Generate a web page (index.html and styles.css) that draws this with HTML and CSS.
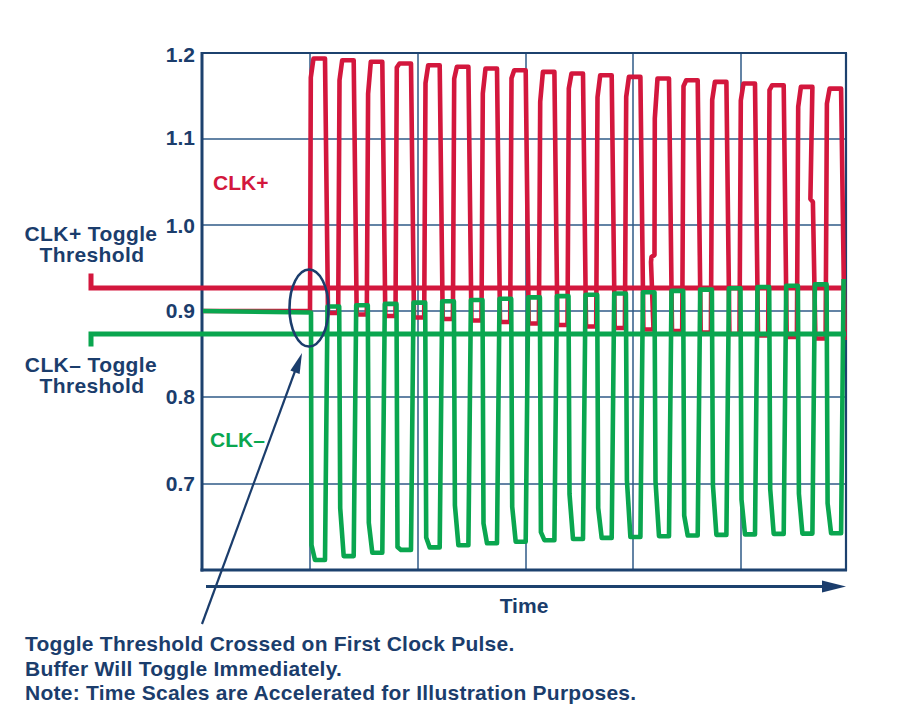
FILE: index.html
```html
<!DOCTYPE html>
<html lang="en">
<head>
<meta charset="utf-8">
<title>CLK toggle threshold</title>
<link rel="stylesheet" href="styles.css">
</head>
<body>
<div class="figure">
  <svg class="chart" width="900" height="632" viewBox="0 0 900 632" xmlns="http://www.w3.org/2000/svg">
    <g class="grid">
      <line x1="310" y1="53" x2="310" y2="570"/>
      <line x1="418" y1="53" x2="418" y2="570"/>
      <line x1="526" y1="53" x2="526" y2="570"/>
      <line x1="633" y1="53" x2="633" y2="570"/>
      <line x1="741" y1="53" x2="741" y2="570"/>
      <line x1="202" y1="139" x2="846" y2="139"/>
      <line x1="202" y1="225" x2="846" y2="225"/>
      <line x1="202" y1="311" x2="846" y2="311"/>
      <line x1="202" y1="397" x2="846" y2="397"/>
      <line x1="202" y1="484" x2="846" y2="484"/>
    </g>
    <g class="frame">
      <line class="frame-thin" x1="201" y1="53" x2="847" y2="53"/>
      <line class="frame-thin" x1="846" y1="53" x2="846" y2="571"/>
      <line class="frame-thick" x1="202" y1="52" x2="202" y2="571.5"/>
      <line class="frame-thick" x1="200.5" y1="570" x2="847" y2="570"/>
    </g>

    <g class="ylabels">
      <text x="195" y="62">1.2</text>
      <text x="195" y="145">1.1</text>
      <text x="195" y="233">1.0</text>
      <text x="195" y="318">0.9</text>
      <text x="195" y="404">0.8</text>
      <text x="195" y="491">0.7</text>
    </g>

    <path id="redWave" class="wave wave-red" d=""/>
    <path class="threshold threshold-red" d="M91 273.5 V288 H846"/>
    <path id="greenWave" class="wave wave-green" d=""/>
    <path class="threshold threshold-green" d="M91 346.5 V334 H846"/>

    <text class="lbl-red" x="213" y="190">CLK+</text>
    <text class="lbl-green" x="210" y="447">CLK–</text>

    <text class="side" x="91" y="241">CLK+ Toggle</text>
    <text class="side" x="92" y="262">Threshold</text>
    <text class="side" x="91" y="372">CLK– Toggle</text>
    <text class="side" x="92" y="393">Threshold</text>

    <ellipse class="marker" cx="309" cy="308" rx="19.5" ry="38.5"/>
    <line class="pointer" x1="202" y1="624" x2="298" y2="363"/>
    <polygon class="pointer-head" points="302,353 299.6,374 290.4,370.6"/>

    <line class="time-axis" x1="206" y1="586.5" x2="826" y2="586.5"/>
    <polygon class="time-head" points="822,580.5 846,586.5 822,592.5"/>
    <text class="time" x="524" y="613">Time</text>
  </svg>
  <div class="note">
    <p>Toggle Threshold Crossed on First Clock Pulse.</p>
    <p>Buffer Will Toggle Immediately.</p>
    <p>Note: Time Scales are Accelerated for Illustration Purposes.</p>
  </div>
</div>
<script src="script.js"></script>
</body>
</html>
```

FILE: styles.css
```css
html, body {
  margin: 0;
  padding: 0;
  background: #ffffff;
}

body {
  width: 900px;
  height: 725px;
  overflow: hidden;
  font-family: "Liberation Sans", Arial, sans-serif;
}

.chart {
  display: block;
}

.chart text {
  font-family: "Liberation Sans", Arial, sans-serif;
  font-weight: 700;
  font-size: 21px;
  fill: #1b3d6c;
}

.ylabels text {
  text-anchor: end;
}

.chart .side {
  text-anchor: middle;
  letter-spacing: 0.4px;
}

.chart .time {
  text-anchor: middle;
}

.chart .lbl-red {
  fill: #d3173d;
}

.chart .lbl-green {
  fill: #0aa64f;
}

.grid line {
  stroke: #2f5a87;
  stroke-width: 1.5;
}

.frame line {
  stroke: #1c416e;
}

.frame .frame-thin {
  stroke-width: 2.2;
}

.frame .frame-thick {
  stroke-width: 3;
}

.wave {
  fill: none;
  stroke-width: 4.6;
  stroke-linejoin: round;
  stroke-linecap: butt;
}

.wave-red {
  stroke: #d3173d;
}

.wave-green {
  stroke: #0aa64f;
}

.threshold {
  fill: none;
  stroke-width: 5;
  stroke-linejoin: miter;
}

.threshold-red {
  stroke: #d3173d;
}

.threshold-green {
  stroke: #0aa64f;
}

.marker {
  fill: none;
  stroke: #1b3d6c;
  stroke-width: 2.6;
}

.pointer {
  stroke: #1b3d6c;
  stroke-width: 2.2;
}

.pointer-head,
.time-head {
  fill: #1b3d6c;
}

.time-axis {
  stroke: #1c416e;
  stroke-width: 3;
}

.note {
  padding-left: 25px;
  font-family: "Liberation Sans", Arial, sans-serif;
  font-weight: 700;
  font-size: 21px;
  line-height: 24.5px;
  letter-spacing: 0.25px;
  color: #1b3d6c;
}

.note p {
  margin: 0;
}
```

FILE: script.js
```js
(function () {
  var N = 19, P = 28.67;
  var redKnee = [19, 20, 32, 4, 18, 12, 25, 8, 30, 15, 22, 20, 40, 6, 18, 17, 5, 20, 15];
  var greenKnee = [15, 48, 30, 3, 10, 40, 20, 35, 8, 45, 30, 57, 55, 20, 50, 35, 45, 40, 30];
  function R(i) { return 325 + P * i; }
  function redTop(i) { return 58.5 + 1.67 * i; }
  function redLow(i) { return 313 + 1.5 * i; }
  function grLow(i) { return 531 + 29 * Math.exp(-i / 7); }
  function grHigh(i) { return 306.5 - 1.3 * i; }

  var red = [[203, 311], [309.5, 311]];
  var green = [[203, 311], [311, 312.5]];

  for (var i = 0; i < N; i++) {
    var r = R(i), l = r - 15;
    var prevRed = i === 0 ? 311 : redLow(i - 1);
    var prevGr = i === 0 ? 312.5 : grHigh(i - 1);
    var t = redTop(i), rl = redLow(i), gl = grLow(i), gh = grHigh(i);

    if (i === 0) {
      red.push([l, prevRed]);
    } else {
      red.push([l - 0.5, prevRed]);
    }
    if (i === 12) {
      red.push([l - 3, 262], [l - 2.5, 257], [l + 0.5, 255]);
    }
    red.push([l + 0.8, t + redKnee[i]], [l + 3.5, t], [r, t]);
    if (i === 17) {
      red.push([r - 2, 199], [r + 0.5, 202]);
    }
    if (i < N - 1) {
      red.push([r + 3, rl], [R(i + 1) - 15.5, rl]);
    } else {
      red.push([r + 3.5, 340]);
    }

    if (i === 0) {
      green.push([l + 1.5, gl - greenKnee[i]]);
    } else {
      green.push([l + 0.5, prevGr], [l + 1.5, gl - greenKnee[i]]);
    }
    green.push([l + 5, gl], [r, gl]);
    if (i < N - 1) {
      green.push([r + 2.5, gh], [R(i + 1) - 15, gh]);
    } else {
      green.push([r + 2.5, 279]);
    }
  }

  function toD(pts) {
    return pts.map(function (p, k) {
      return (k === 0 ? 'M' : 'L') + p[0].toFixed(1) + ' ' + p[1].toFixed(1);
    }).join(' ');
  }

  document.getElementById('redWave').setAttribute('d', toD(red));
  document.getElementById('greenWave').setAttribute('d', toD(green));
})();
```
